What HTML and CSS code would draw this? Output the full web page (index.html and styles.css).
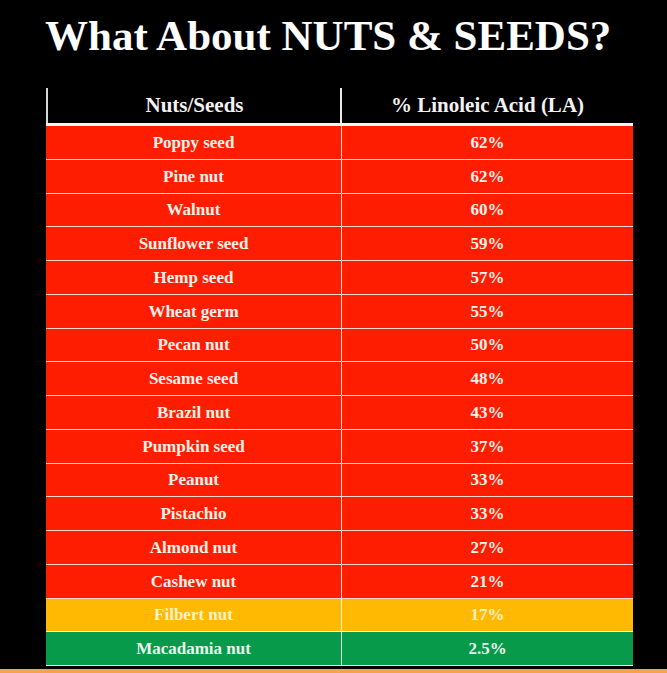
FILE: index.html
```html
<!DOCTYPE html>
<html lang="en">
<head>
<meta charset="utf-8">
<title>What About NUTS &amp; SEEDS?</title>
<link rel="stylesheet" href="styles.css">
</head>
<body>
<h1 class="title">What About NUTS &amp; SEEDS?</h1>
<div class="table">
  <div class="row head">
    <div class="cell">Nuts/Seeds</div>
    <div class="cell">% Linoleic Acid (LA)</div>
  </div>
  <div class="row red"><div class="cell">Poppy seed</div><div class="cell">62%</div></div>
  <div class="row red"><div class="cell">Pine nut</div><div class="cell">62%</div></div>
  <div class="row red"><div class="cell">Walnut</div><div class="cell">60%</div></div>
  <div class="row red"><div class="cell">Sunflower seed</div><div class="cell">59%</div></div>
  <div class="row red"><div class="cell">Hemp seed</div><div class="cell">57%</div></div>
  <div class="row red"><div class="cell">Wheat germ</div><div class="cell">55%</div></div>
  <div class="row red"><div class="cell">Pecan nut</div><div class="cell">50%</div></div>
  <div class="row red"><div class="cell">Sesame seed</div><div class="cell">48%</div></div>
  <div class="row red"><div class="cell">Brazil nut</div><div class="cell">43%</div></div>
  <div class="row red"><div class="cell">Pumpkin seed</div><div class="cell">37%</div></div>
  <div class="row red"><div class="cell">Peanut</div><div class="cell">33%</div></div>
  <div class="row red"><div class="cell">Pistachio</div><div class="cell">33%</div></div>
  <div class="row red"><div class="cell">Almond nut</div><div class="cell">27%</div></div>
  <div class="row red"><div class="cell">Cashew nut</div><div class="cell">21%</div></div>
  <div class="row amber"><div class="cell">Filbert nut</div><div class="cell">17%</div></div>
  <div class="row green"><div class="cell">Macadamia nut</div><div class="cell">2.5%</div></div>
</div>
<div class="bottom-bar"></div>
</body>
</html>
```

FILE: styles.css
```css
html, body {
  margin: 0;
  padding: 0;
  background: #000;
}
body {
  width: 667px;
  height: 673px;
  overflow: hidden;
  font-family: "Liberation Serif", "Times New Roman", serif;
  color: #fff;
}
.title {
  margin: 0;
  padding: 12px 0 0 45px;
  font-size: 43px;
  line-height: 48px;
  font-weight: bold;
  color: #fdfdfd;
  letter-spacing: 0;
}
.table {
  margin: 28px 0 0 46px;
  width: 587px;
}
.row {
  display: grid;
  grid-template-columns: 295px 292px;
  height: 33.75px;
  box-sizing: border-box;
  border-bottom: 1px solid #ffd9cf;
  font-weight: bold;
  font-size: 17px;
}
.cell {
  display: flex;
  align-items: center;
  justify-content: center;
  box-sizing: border-box;
  padding-top: 1px;
}
.cell + .cell {
  border-left: 1px solid #ffe2d8;
}
.head {
  height: 38px;
  background: #000;
  border-bottom: 3px solid #f4f4f4;
  font-size: 21px;
  color: #f2f2f2;
}
.head .cell {
  padding-top: 0;
}
.head .cell:first-child {
  border-left: 2px solid #d8d8d8;
}
.head .cell + .cell {
  border-left: 2px solid #e8e8e8;
  margin-left: -1px;
}
.red {
  background: #ff1d00;
  color: #fff2ec;
}
.amber {
  background: #ffb902;
  color: #fff1c4;
  border-bottom-color: #fff4dc;
}
.amber .cell + .cell {
  border-left-color: #fff4dc;
}
.green {
  background: #079a4b;
  color: #e9f6ec;
  border-bottom-color: #f2fbf4;
}
.green .cell + .cell {
  border-left-color: #d8f2e0;
}
.bottom-bar {
  margin-top: 3px;
  height: 10px;
  background: #f6a24c;
}
```
